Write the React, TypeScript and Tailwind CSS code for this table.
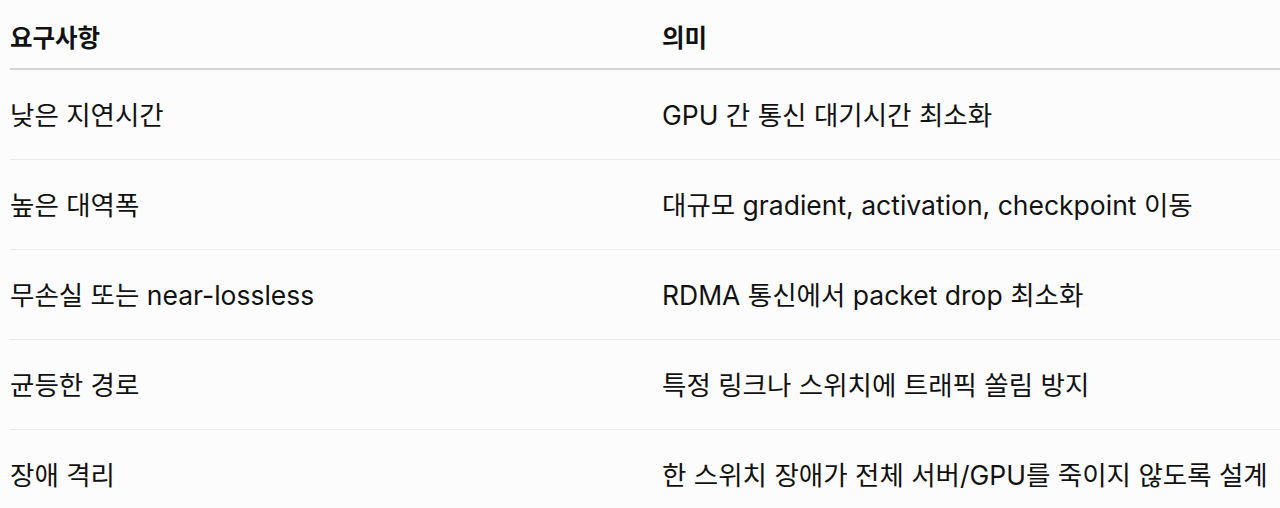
import React from 'react';

interface Row {
  requirement: string;
  meaning: string;
}

const rows: Row[] = [
  { requirement: '낮은 지연시간', meaning: 'GPU 간 통신 대기시간 최소화' },
  { requirement: '높은 대역폭', meaning: '대규모 gradient, activation, checkpoint 이동' },
  { requirement: '무손실 또는 near-lossless', meaning: 'RDMA 통신에서 packet drop 최소화' },
  { requirement: '균등한 경로', meaning: '특정 링크나 스위치에 트래픽 쏠림 방지' },
  { requirement: '장애 격리', meaning: '한 스위치 장애가 전체 서버/GPU를 죽이지 않도록 설계' },
];

const App = () => {
  return (
    <div
      className="min-h-[508px] w-full overflow-hidden bg-[#fcfcfc] pl-[10px] text-[#111]"
      style={{ fontFamily: 'Inter, "Noto Sans CJK KR", sans-serif' }}
    >
      <table className="w-[1270px] table-fixed border-collapse">
        <colgroup>
          <col className="w-[652px]" />
          <col />
        </colgroup>
        <thead>
          <tr className="border-b-2 border-[#d4d4d4]">
            <th className="h-[69px] pt-[8px] text-left align-middle text-[24.5px] font-semibold">요구사항</th>
            <th className="h-[69px] pt-[8px] text-left align-middle text-[24.5px] font-semibold">의미</th>
          </tr>
        </thead>
        <tbody>
          {rows.map((row) => (
            <tr key={row.requirement} className="border-b border-[#e9e9e9]">
              <td className="h-[90px] pt-[4px] align-middle text-[26.5px]">{row.requirement}</td>
              <td className="h-[90px] pt-[4px] align-middle text-[26.5px]">{row.meaning}</td>
            </tr>
          ))}
        </tbody>
      </table>
    </div>
  );
};

export default App;
